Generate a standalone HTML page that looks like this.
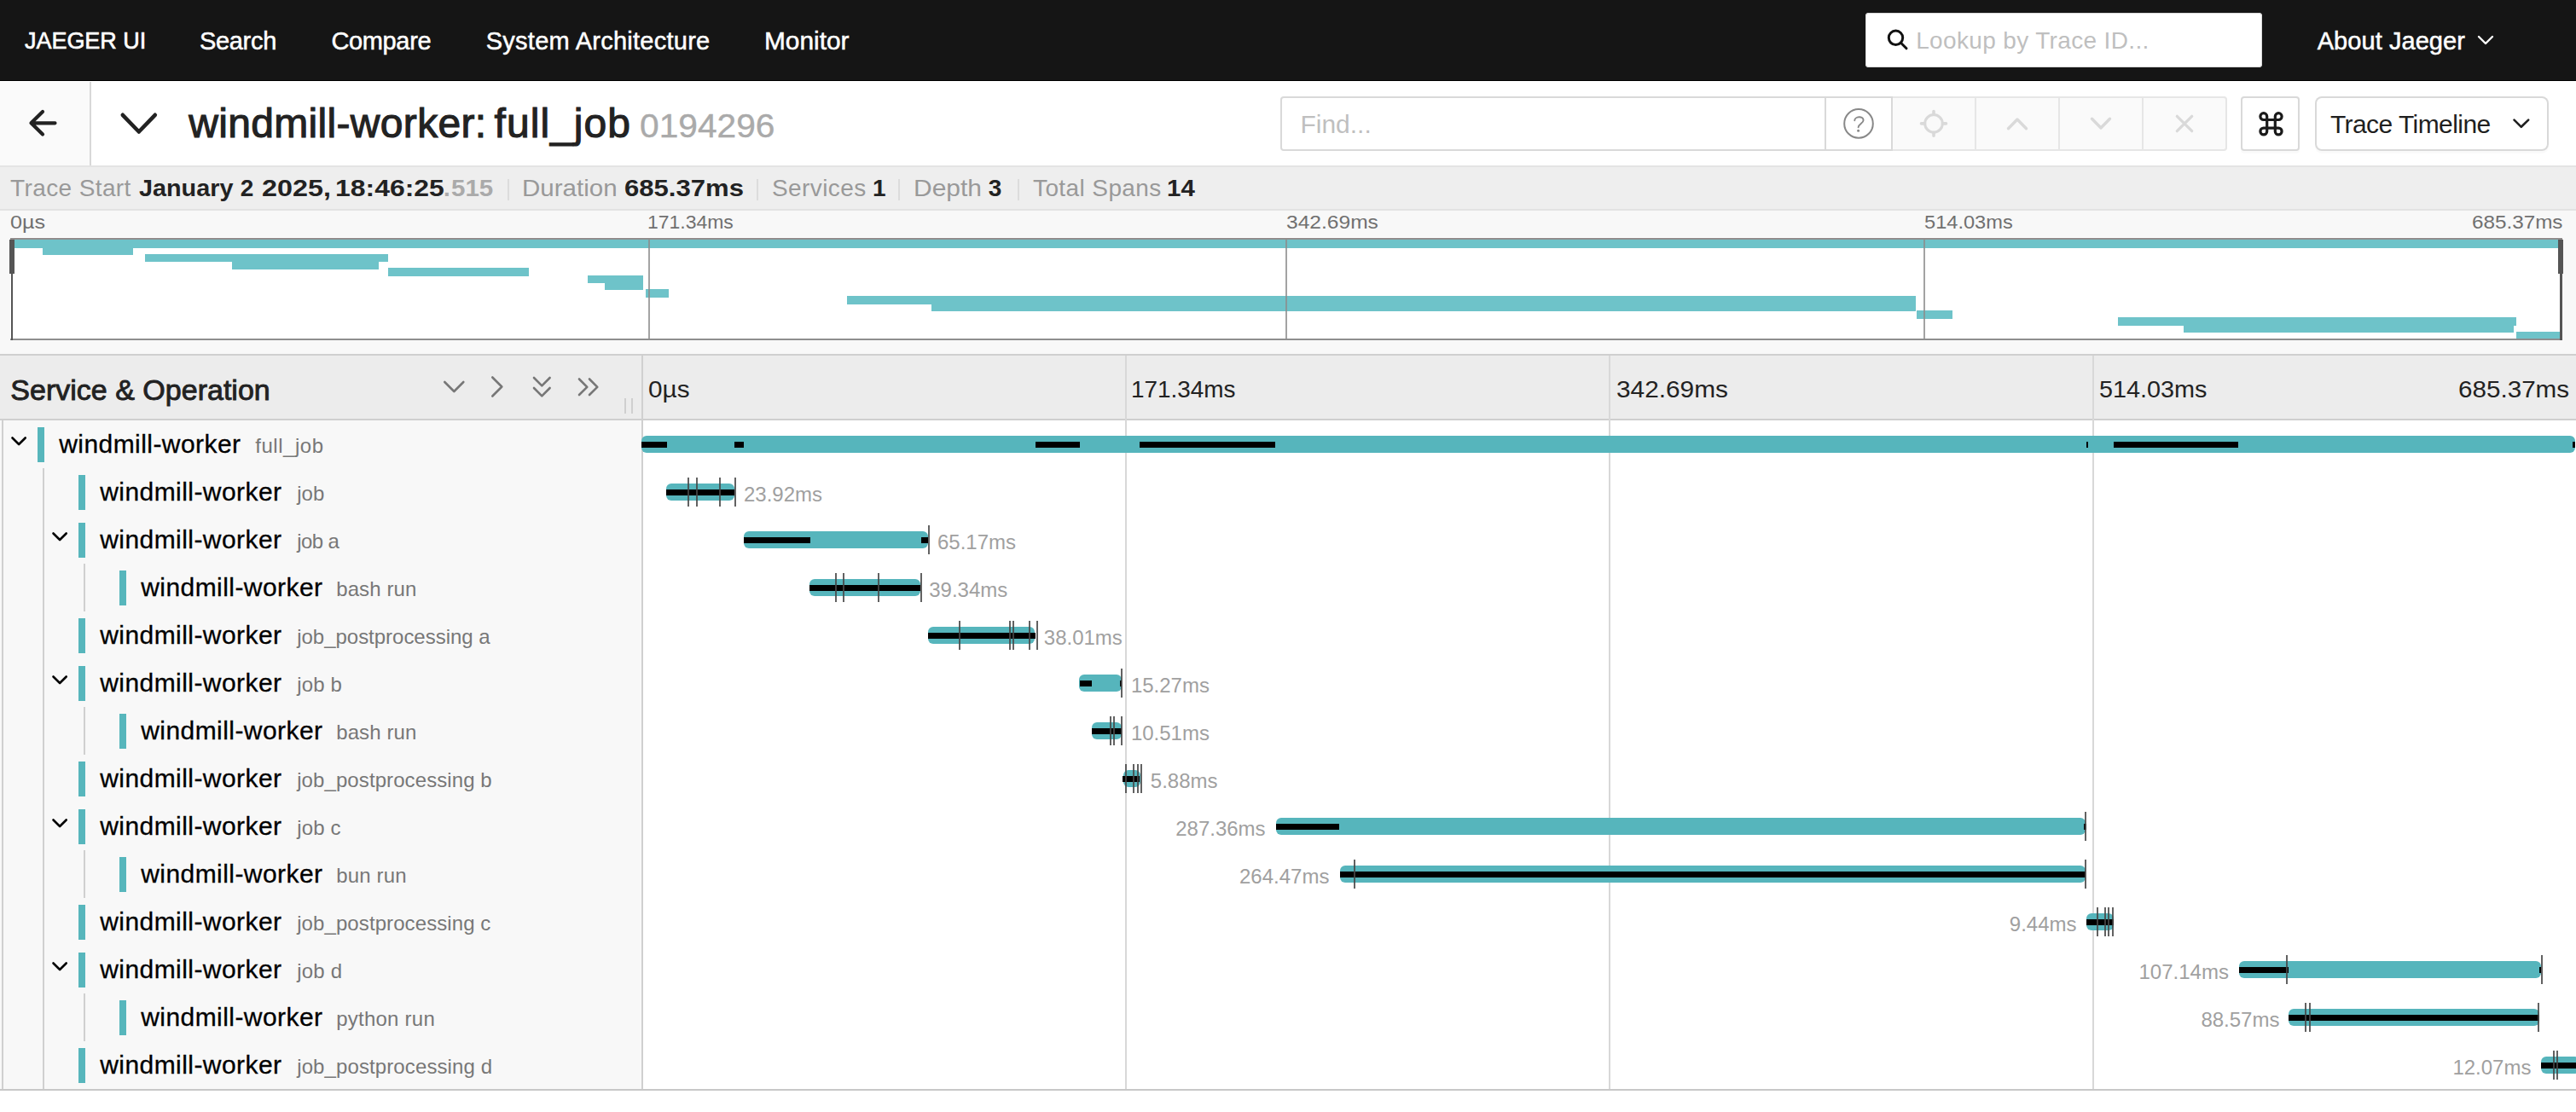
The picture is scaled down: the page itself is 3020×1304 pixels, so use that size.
<!DOCTYPE html>
<html><head><meta charset="utf-8"><title>Jaeger UI</title>
<style>
html,body{margin:0;padding:0;width:3020px;height:1304px;overflow:hidden;background:#fff;}
body{position:relative;font-family:"Liberation Sans", sans-serif;}
.r{position:absolute;}
.t{position:absolute;white-space:nowrap;}
svg{position:absolute;left:0;top:0;}
</style></head><body>
<div class="r" style="left:0.0px;top:0.0px;width:3020.0px;height:95.0px;background:#151515;"></div>
<div class="r" style="left:0.0px;top:94.0px;width:3020.0px;height:1.0px;background:#000;"></div>
<div class="r" style="left:2187.0px;top:15.0px;width:465.0px;height:64.0px;background:#fff;border-radius:4px;box-shadow:inset 0 0 0 1px #d9d9d9;"></div>
<div class="r" style="left:0.0px;top:95.0px;width:3020.0px;height:99.0px;background:#fff;"></div>
<div class="r" style="left:0.0px;top:96.0px;width:105.0px;height:98.0px;background:#fafafa;"></div>
<div class="r" style="left:105.0px;top:96.0px;width:2.0px;height:100.0px;background:#d8d8d8;"></div>
<div class="r" style="left:0.0px;top:194.0px;width:3020.0px;height:2.0px;background:#e4e4e4;"></div>
<div class="r" style="left:1501.0px;top:113.0px;width:718.0px;height:64.0px;background:#fff;border-radius:4px 0 0 4px;box-shadow:inset 0 0 0 2px #d9d9d9;"></div>
<div class="r" style="left:2217.0px;top:113.0px;width:393.5px;height:64.0px;background:#fafafa;border-radius:0 4px 4px 0;box-shadow:inset 0 0 0 2px #e6e6e6;"></div>
<div class="r" style="left:2139.0px;top:113.0px;width:2.0px;height:64.0px;background:#d9d9d9;"></div>
<div class="r" style="left:2217.0px;top:113.0px;width:2.0px;height:64.0px;background:#d9d9d9;"></div>
<div class="r" style="left:2315.0px;top:113.0px;width:2.0px;height:64.0px;background:#e6e6e6;"></div>
<div class="r" style="left:2413.0px;top:113.0px;width:2.0px;height:64.0px;background:#e6e6e6;"></div>
<div class="r" style="left:2511.0px;top:113.0px;width:2.0px;height:64.0px;background:#e6e6e6;"></div>
<div class="r" style="left:2627.4px;top:113.0px;width:69.1px;height:63.5px;background:#fff;border-radius:4px;box-shadow:inset 0 0 0 2px #d9d9d9, 0 3px 0 rgba(0,0,0,0.02);"></div>
<div class="r" style="left:2713.6px;top:113.0px;width:274.0px;height:63.5px;background:#fff;border-radius:8px;box-shadow:inset 0 0 0 2px #d9d9d9, 0 3px 0 rgba(0,0,0,0.02);"></div>
<div class="r" style="left:0.0px;top:196.0px;width:3020.0px;height:49.0px;background:#eeeeee;"></div>
<div class="r" style="left:0.0px;top:245.0px;width:3020.0px;height:2.0px;background:#e2e2e2;"></div>
<div class="r" style="left:594.6px;top:210.0px;width:2.0px;height:25.0px;background:#dcdcdc;"></div>
<div class="r" style="left:886.5px;top:210.0px;width:2.0px;height:25.0px;background:#dcdcdc;"></div>
<div class="r" style="left:1053.4px;top:210.0px;width:2.0px;height:25.0px;background:#dcdcdc;"></div>
<div class="r" style="left:1193.0px;top:210.0px;width:2.0px;height:25.0px;background:#dcdcdc;"></div>
<div class="r" style="left:0.0px;top:247.0px;width:3020.0px;height:168.0px;background:#f8f8f8;"></div>
<div class="r" style="left:0.0px;top:415.0px;width:3020.0px;height:2.0px;background:#cfcfcf;"></div>
<div class="r" style="left:12.0px;top:279.0px;width:2992.0px;height:120.0px;background:#fff;"></div>
<div class="r" style="left:12.0px;top:278.0px;width:2992.0px;height:1.0px;background:#fff;"></div>
<div class="r" style="left:12.0px;top:281.1px;width:2990.7px;height:9.6px;background:#6ec3c9;"></div>
<div class="r" style="left:50.3px;top:289.4px;width:105.5px;height:9.6px;background:#6ec3c9;"></div>
<div class="r" style="left:169.8px;top:297.7px;width:285.5px;height:9.6px;background:#6ec3c9;"></div>
<div class="r" style="left:272.3px;top:306.0px;width:171.8px;height:9.6px;background:#6ec3c9;"></div>
<div class="r" style="left:455.3px;top:314.2px;width:164.9px;height:9.6px;background:#6ec3c9;"></div>
<div class="r" style="left:688.8px;top:322.5px;width:65.3px;height:9.6px;background:#6ec3c9;"></div>
<div class="r" style="left:708.6px;top:330.8px;width:45.5px;height:9.6px;background:#6ec3c9;"></div>
<div class="r" style="left:756.7px;top:339.1px;width:27.0px;height:9.6px;background:#6ec3c9;"></div>
<div class="r" style="left:993.1px;top:347.4px;width:1252.7px;height:9.6px;background:#6ec3c9;"></div>
<div class="r" style="left:1092.2px;top:355.7px;width:1153.7px;height:9.6px;background:#6ec3c9;"></div>
<div class="r" style="left:2246.8px;top:364.0px;width:41.8px;height:9.6px;background:#6ec3c9;"></div>
<div class="r" style="left:2482.5px;top:372.2px;width:467.4px;height:9.6px;background:#6ec3c9;"></div>
<div class="r" style="left:2559.9px;top:380.5px;width:387.3px;height:9.6px;background:#6ec3c9;"></div>
<div class="r" style="left:2949.9px;top:388.8px;width:52.8px;height:9.6px;background:#6ec3c9;"></div>
<div class="r" style="left:760.0px;top:281.0px;width:2.0px;height:116.0px;background:rgba(140,140,140,0.8);"></div>
<div class="r" style="left:1507.3px;top:281.0px;width:2.0px;height:116.0px;background:rgba(140,140,140,0.8);"></div>
<div class="r" style="left:2255.0px;top:281.0px;width:2.0px;height:116.0px;background:rgba(140,140,140,0.8);"></div>
<div class="r" style="left:12.0px;top:279.0px;width:2992.0px;height:2.0px;background:#928e8e;"></div>
<div class="r" style="left:12.0px;top:397.0px;width:2992.0px;height:2.0px;background:#8e8e8e;"></div>
<div class="r" style="left:12.5px;top:281.0px;width:2.5px;height:118.0px;background:#555;"></div>
<div class="r" style="left:11.0px;top:281.0px;width:6.0px;height:40.0px;background:#555;"></div>
<div class="r" style="left:3001.0px;top:281.0px;width:2.5px;height:118.0px;background:#555;"></div>
<div class="r" style="left:2999.0px;top:281.0px;width:6.0px;height:40.0px;background:#555;"></div>
<div class="r" style="left:0.0px;top:417.0px;width:3020.0px;height:74.0px;background:#ececec;"></div>
<div class="r" style="left:0.0px;top:491.0px;width:3020.0px;height:2.0px;background:#cfcfcf;"></div>
<div class="r" style="left:0.0px;top:493.0px;width:752.0px;height:784.0px;background:#f8f8f8;"></div>
<div class="r" style="left:752.0px;top:417.0px;width:2.0px;height:860.0px;background:#d0d0d0;"></div>
<div class="r" style="left:754.0px;top:493.0px;width:2266.0px;height:784.0px;background:#fff;"></div>
<div class="r" style="left:0.0px;top:1277.0px;width:3020.0px;height:2.0px;background:#c8c8c8;"></div>
<div class="r" style="left:1319.3px;top:417.0px;width:2.0px;height:860.0px;background:#d8d8d8;"></div>
<div class="r" style="left:1886.0px;top:417.0px;width:2.0px;height:860.0px;background:#d8d8d8;"></div>
<div class="r" style="left:2452.8px;top:417.0px;width:2.0px;height:860.0px;background:#d8d8d8;"></div>
<div class="r" style="left:732.0px;top:467.0px;width:2.0px;height:18.0px;background:#cfcfcf;"></div>
<div class="r" style="left:740.0px;top:467.0px;width:2.0px;height:18.0px;background:#cfcfcf;"></div>
<div class="r" style="left:2.0px;top:493.0px;width:2.0px;height:784.0px;background:#d0d0d0;"></div>
<div class="r" style="left:50.0px;top:549.0px;width:2.0px;height:728.0px;background:#d0d0d0;"></div>
<div class="r" style="left:44.0px;top:501.0px;width:8.0px;height:40.6px;background:#57b6bc;"></div>
<div class="r" style="left:92.0px;top:557.0px;width:8.0px;height:40.6px;background:#57b6bc;"></div>
<div class="r" style="left:92.0px;top:613.0px;width:8.0px;height:40.6px;background:#57b6bc;"></div>
<div class="r" style="left:98.0px;top:661.0px;width:2.0px;height:56.0px;background:#d0d0d0;"></div>
<div class="r" style="left:140.0px;top:669.0px;width:8.0px;height:40.6px;background:#57b6bc;"></div>
<div class="r" style="left:92.0px;top:725.0px;width:8.0px;height:40.6px;background:#57b6bc;"></div>
<div class="r" style="left:92.0px;top:781.0px;width:8.0px;height:40.6px;background:#57b6bc;"></div>
<div class="r" style="left:98.0px;top:829.0px;width:2.0px;height:56.0px;background:#d0d0d0;"></div>
<div class="r" style="left:140.0px;top:837.0px;width:8.0px;height:40.6px;background:#57b6bc;"></div>
<div class="r" style="left:92.0px;top:893.0px;width:8.0px;height:40.6px;background:#57b6bc;"></div>
<div class="r" style="left:92.0px;top:949.0px;width:8.0px;height:40.6px;background:#57b6bc;"></div>
<div class="r" style="left:98.0px;top:997.0px;width:2.0px;height:56.0px;background:#d0d0d0;"></div>
<div class="r" style="left:140.0px;top:1005.0px;width:8.0px;height:40.6px;background:#57b6bc;"></div>
<div class="r" style="left:92.0px;top:1061.0px;width:8.0px;height:40.6px;background:#57b6bc;"></div>
<div class="r" style="left:92.0px;top:1117.0px;width:8.0px;height:40.6px;background:#57b6bc;"></div>
<div class="r" style="left:98.0px;top:1165.0px;width:2.0px;height:56.0px;background:#d0d0d0;"></div>
<div class="r" style="left:140.0px;top:1173.0px;width:8.0px;height:40.6px;background:#57b6bc;"></div>
<div class="r" style="left:92.0px;top:1229.0px;width:8.0px;height:40.6px;background:#57b6bc;"></div>
<div class="r" style="left:752.0px;top:511.0px;width:2267.0px;height:20.0px;background:#56b5bc;border-radius:6px;"></div>
<div class="r" style="left:752.0px;top:518.0px;width:30.0px;height:7.0px;background:#000;"></div>
<div class="r" style="left:861.0px;top:518.0px;width:11.0px;height:7.0px;background:#000;"></div>
<div class="r" style="left:1214.0px;top:518.0px;width:52.0px;height:7.0px;background:#000;"></div>
<div class="r" style="left:1336.0px;top:518.0px;width:159.0px;height:7.0px;background:#000;"></div>
<div class="r" style="left:2445.5px;top:518.0px;width:2.0px;height:7.0px;background:#000;"></div>
<div class="r" style="left:2478.0px;top:518.0px;width:146.0px;height:7.0px;background:#000;"></div>
<div class="r" style="left:3016.0px;top:518.0px;width:3.0px;height:7.0px;background:#000;"></div>
<div class="r" style="left:781.0px;top:567.0px;width:80.0px;height:20.0px;background:#56b5bc;border-radius:6px;"></div>
<div class="r" style="left:781.0px;top:574.0px;width:80.0px;height:7.0px;background:#000;"></div>
<div class="r" style="left:806.0px;top:560.0px;width:2.0px;height:34.0px;background:rgba(70,70,70,0.85);"></div>
<div class="r" style="left:816.0px;top:560.0px;width:2.0px;height:34.0px;background:rgba(70,70,70,0.85);"></div>
<div class="r" style="left:843.0px;top:560.0px;width:2.0px;height:34.0px;background:rgba(70,70,70,0.85);"></div>
<div class="r" style="left:861.0px;top:560.0px;width:2.0px;height:34.0px;background:rgba(70,70,70,0.85);"></div>
<div class="r" style="left:871.6px;top:623.0px;width:216.4px;height:20.0px;background:#56b5bc;border-radius:6px;"></div>
<div class="r" style="left:871.6px;top:630.0px;width:78.4px;height:7.0px;background:#000;"></div>
<div class="r" style="left:1080.0px;top:630.0px;width:8.0px;height:7.0px;background:#000;"></div>
<div class="r" style="left:1088.3px;top:616.0px;width:2.0px;height:34.0px;background:rgba(70,70,70,0.85);"></div>
<div class="r" style="left:949.3px;top:679.0px;width:130.2px;height:20.0px;background:#56b5bc;border-radius:6px;"></div>
<div class="r" style="left:949.3px;top:686.0px;width:130.2px;height:7.0px;background:#000;"></div>
<div class="r" style="left:979.0px;top:672.0px;width:2.0px;height:34.0px;background:rgba(70,70,70,0.85);"></div>
<div class="r" style="left:988.0px;top:672.0px;width:2.0px;height:34.0px;background:rgba(70,70,70,0.85);"></div>
<div class="r" style="left:1029.0px;top:672.0px;width:2.0px;height:34.0px;background:rgba(70,70,70,0.85);"></div>
<div class="r" style="left:1079.0px;top:672.0px;width:2.0px;height:34.0px;background:rgba(70,70,70,0.85);"></div>
<div class="r" style="left:1088.0px;top:735.0px;width:125.0px;height:20.0px;background:#56b5bc;border-radius:6px;"></div>
<div class="r" style="left:1088.0px;top:742.0px;width:126.0px;height:7.0px;background:#000;"></div>
<div class="r" style="left:1124.0px;top:728.0px;width:2.0px;height:34.0px;background:rgba(70,70,70,0.85);"></div>
<div class="r" style="left:1183.0px;top:728.0px;width:2.0px;height:34.0px;background:rgba(70,70,70,0.85);"></div>
<div class="r" style="left:1187.0px;top:728.0px;width:2.0px;height:34.0px;background:rgba(70,70,70,0.85);"></div>
<div class="r" style="left:1206.0px;top:728.0px;width:2.0px;height:34.0px;background:rgba(70,70,70,0.85);"></div>
<div class="r" style="left:1215.0px;top:728.0px;width:2.0px;height:34.0px;background:rgba(70,70,70,0.85);"></div>
<div class="r" style="left:1265.0px;top:791.0px;width:49.5px;height:20.0px;background:#56b5bc;border-radius:6px;"></div>
<div class="r" style="left:1266.0px;top:798.0px;width:14.0px;height:7.0px;background:#000;"></div>
<div class="r" style="left:1313.0px;top:798.0px;width:2.0px;height:7.0px;background:#000;"></div>
<div class="r" style="left:1314.0px;top:784.0px;width:2.0px;height:34.0px;background:rgba(70,70,70,0.85);"></div>
<div class="r" style="left:1280.0px;top:847.0px;width:34.5px;height:20.0px;background:#56b5bc;border-radius:6px;"></div>
<div class="r" style="left:1280.0px;top:854.0px;width:34.5px;height:7.0px;background:#000;"></div>
<div class="r" style="left:1301.0px;top:840.0px;width:2.0px;height:34.0px;background:rgba(70,70,70,0.85);"></div>
<div class="r" style="left:1305.0px;top:840.0px;width:2.0px;height:34.0px;background:rgba(70,70,70,0.85);"></div>
<div class="r" style="left:1314.0px;top:840.0px;width:2.0px;height:34.0px;background:rgba(70,70,70,0.85);"></div>
<div class="r" style="left:1316.5px;top:903.0px;width:20.5px;height:20.0px;background:#56b5bc;border-radius:6px;"></div>
<div class="r" style="left:1316.0px;top:910.0px;width:20.0px;height:7.0px;background:#000;"></div>
<div class="r" style="left:1319.0px;top:896.0px;width:2.0px;height:34.0px;background:rgba(70,70,70,0.85);"></div>
<div class="r" style="left:1328.0px;top:896.0px;width:2.0px;height:34.0px;background:rgba(70,70,70,0.85);"></div>
<div class="r" style="left:1333.0px;top:896.0px;width:2.0px;height:34.0px;background:rgba(70,70,70,0.85);"></div>
<div class="r" style="left:1337.0px;top:896.0px;width:2.0px;height:34.0px;background:rgba(70,70,70,0.85);"></div>
<div class="r" style="left:1495.7px;top:959.0px;width:949.6px;height:20.0px;background:#56b5bc;border-radius:6px;"></div>
<div class="r" style="left:1495.5px;top:966.0px;width:74.5px;height:7.0px;background:#000;"></div>
<div class="r" style="left:2443.0px;top:966.0px;width:3.0px;height:7.0px;background:#000;"></div>
<div class="r" style="left:2444.0px;top:952.0px;width:2.0px;height:34.0px;background:rgba(70,70,70,0.85);"></div>
<div class="r" style="left:1570.8px;top:1015.0px;width:874.5px;height:20.0px;background:#56b5bc;border-radius:6px;"></div>
<div class="r" style="left:1570.8px;top:1022.0px;width:874.5px;height:7.0px;background:#000;"></div>
<div class="r" style="left:1587.0px;top:1008.0px;width:2.0px;height:34.0px;background:rgba(70,70,70,0.85);"></div>
<div class="r" style="left:2444.0px;top:1008.0px;width:2.0px;height:34.0px;background:rgba(70,70,70,0.85);"></div>
<div class="r" style="left:2446.0px;top:1071.0px;width:31.7px;height:20.0px;background:#56b5bc;border-radius:6px;"></div>
<div class="r" style="left:2446.0px;top:1078.0px;width:31.7px;height:7.0px;background:#000;"></div>
<div class="r" style="left:2458.0px;top:1064.0px;width:2.0px;height:34.0px;background:rgba(70,70,70,0.85);"></div>
<div class="r" style="left:2467.0px;top:1064.0px;width:2.0px;height:34.0px;background:rgba(70,70,70,0.85);"></div>
<div class="r" style="left:2471.0px;top:1064.0px;width:2.0px;height:34.0px;background:rgba(70,70,70,0.85);"></div>
<div class="r" style="left:2476.0px;top:1064.0px;width:2.0px;height:34.0px;background:rgba(70,70,70,0.85);"></div>
<div class="r" style="left:2624.7px;top:1127.0px;width:354.3px;height:20.0px;background:#56b5bc;border-radius:6px;"></div>
<div class="r" style="left:2624.5px;top:1134.0px;width:58.5px;height:7.0px;background:#000;"></div>
<div class="r" style="left:2977.0px;top:1134.0px;width:2.0px;height:7.0px;background:#000;"></div>
<div class="r" style="left:2680.0px;top:1120.0px;width:2.0px;height:34.0px;background:rgba(70,70,70,0.85);"></div>
<div class="r" style="left:2979.0px;top:1120.0px;width:2.0px;height:34.0px;background:rgba(70,70,70,0.85);"></div>
<div class="r" style="left:2683.4px;top:1183.0px;width:293.6px;height:20.0px;background:#56b5bc;border-radius:6px;"></div>
<div class="r" style="left:2683.4px;top:1190.0px;width:293.6px;height:7.0px;background:#000;"></div>
<div class="r" style="left:2702.0px;top:1176.0px;width:2.0px;height:34.0px;background:rgba(70,70,70,0.85);"></div>
<div class="r" style="left:2707.0px;top:1176.0px;width:2.0px;height:34.0px;background:rgba(70,70,70,0.85);"></div>
<div class="r" style="left:2975.0px;top:1176.0px;width:2.0px;height:34.0px;background:rgba(70,70,70,0.85);"></div>
<div class="r" style="left:2979.0px;top:1239.0px;width:45.0px;height:20.0px;background:#56b5bc;border-radius:6px;"></div>
<div class="r" style="left:2979.0px;top:1246.0px;width:45.0px;height:7.0px;background:#000;"></div>
<div class="r" style="left:2993.0px;top:1232.0px;width:2.0px;height:34.0px;background:rgba(70,70,70,0.85);"></div>
<div class="r" style="left:2997.0px;top:1232.0px;width:2.0px;height:34.0px;background:rgba(70,70,70,0.85);"></div>
<svg width="3020" height="1304" viewBox="0 0 3020 1304">
<path d="M36.5 144.3 H64.5 M50 131 L36.5 144.3 L50 157.6" fill="none" stroke="#222" stroke-width="4.2" stroke-linecap="round" stroke-linejoin="round"/>
<path d="M143.8 134.8 L162.8 154.5 L181.8 134.8" fill="none" stroke="#222" stroke-width="4.6" stroke-linecap="round" stroke-linejoin="round"/>
<circle cx="2222.5" cy="44.3" r="8.2" fill="none" stroke="#111" stroke-width="3"/><path d="M2228.5 50.3 L2235 56.8" stroke="#111" stroke-width="3" stroke-linecap="round"/>
<path d="M2906 43 L2914 51 L2922 43" fill="none" stroke="#fff" stroke-width="2.4" stroke-linecap="round" stroke-linejoin="round"/>
<circle cx="2179" cy="144.9" r="16.8" fill="none" stroke="#888" stroke-width="2"/>
<path d="M2174.3 141.2 C2174.3 136.5 2184.6 135.5 2184.6 141 C2184.6 144.5 2178.6 145.5 2178.6 149.3" fill="none" stroke="#888" stroke-width="1.9" stroke-linecap="round"/><circle cx="2178.6" cy="153.2" r="1.5" fill="#888"/>
<circle cx="2267" cy="144.9" r="10.3" fill="none" stroke="#d9d9d9" stroke-width="3"/><path d="M2267 130.5 V134.5 M2267 155.3 V159.3 M2252.5 144.9 H2256.5 M2277.5 144.9 H2281.5" stroke="#d9d9d9" stroke-width="3.6" stroke-linecap="round"/>
<path d="M2354.5 150.8 L2365 140 L2375.5 150.8" fill="none" stroke="#d9d9d9" stroke-width="3.4" stroke-linecap="round" stroke-linejoin="round"/>
<path d="M2452.5 139.2 L2463 150 L2473.5 139.2" fill="none" stroke="#d9d9d9" stroke-width="3.4" stroke-linecap="round" stroke-linejoin="round"/>
<path d="M2552.3 136.3 L2569.7 153.7 M2569.7 136.3 L2552.3 153.7" fill="none" stroke="#d9d9d9" stroke-width="3.2" stroke-linecap="round"/>
<g fill="none" stroke="#1a1a1a" stroke-width="3.2"><path d="M2657.7 140.5 V150.10000000000002 M2667.3 140.5 V150.10000000000002 M2657.7 140.5 H2667.3 M2657.7 150.10000000000002 H2667.3"/><path d="M2657.7 140.5 V136.6 A3.9 3.9 0 1 0 2653.7999999999997 140.5 H2657.7"/><path d="M2667.3 140.5 V136.6 A3.9 3.9 0 1 1 2671.2000000000003 140.5 H2667.3"/><path d="M2657.7 150.10000000000002 V154.00000000000003 A3.9 3.9 0 1 1 2653.7999999999997 150.10000000000002 H2657.7"/><path d="M2667.3 150.10000000000002 V154.00000000000003 A3.9 3.9 0 1 0 2671.2000000000003 150.10000000000002 H2667.3"/></g>
<path d="M2947.5 140.6 L2955.8 148.8 L2964.2 140.6" fill="none" stroke="#1f1f1f" stroke-width="2.6" stroke-linecap="round" stroke-linejoin="round"/>
<path d="M521.3 448 L532.3 459 L543.3 448" fill="none" stroke="#777" stroke-width="2.6" stroke-linecap="round" stroke-linejoin="round"/>
<path d="M577.3 442.5 L588.3 453.5 L577.3 464.5" fill="none" stroke="#777" stroke-width="2.6" stroke-linecap="round" stroke-linejoin="round"/>
<path d="M626 443 L635.3 452.3 L644.6 443 M626 455 L635.3 464.3 L644.6 455" fill="none" stroke="#777" stroke-width="2.6" stroke-linecap="round" stroke-linejoin="round"/>
<path d="M679 444.5 L688.3 453.8 L679 463 M691 444.5 L700.3 453.8 L691 463" fill="none" stroke="#777" stroke-width="2.6" stroke-linecap="round" stroke-linejoin="round"/>
<path d="M14.5 513.5 L22.1 521 L29.7 513.5" fill="none" stroke="#000" stroke-width="2.6" stroke-linecap="round" stroke-linejoin="round"/>
<path d="M62.5 625.5 L70.1 633 L77.7 625.5" fill="none" stroke="#000" stroke-width="2.6" stroke-linecap="round" stroke-linejoin="round"/>
<path d="M62.5 793.5 L70.1 801 L77.7 793.5" fill="none" stroke="#000" stroke-width="2.6" stroke-linecap="round" stroke-linejoin="round"/>
<path d="M62.5 961.5 L70.1 969 L77.7 961.5" fill="none" stroke="#000" stroke-width="2.6" stroke-linecap="round" stroke-linejoin="round"/>
<path d="M62.5 1129.5 L70.1 1137 L77.7 1129.5" fill="none" stroke="#000" stroke-width="2.6" stroke-linecap="round" stroke-linejoin="round"/>
</svg>
<div class="t" style="left:29.1px;top:35.3px;font-size:27px;line-height:27px;color:#fff;letter-spacing:-0.06px;-webkit-text-stroke:0.6px #fff;">JAEGER UI</div>
<div class="t" style="left:233.9px;top:33.7px;font-size:29px;line-height:29px;color:#fff;letter-spacing:-0.30px;-webkit-text-stroke:0.5px #fff;">Search</div>
<div class="t" style="left:388.4px;top:33.7px;font-size:29px;line-height:29px;color:#fff;letter-spacing:-0.35px;-webkit-text-stroke:0.5px #fff;">Compare</div>
<div class="t" style="left:569.7px;top:33.7px;font-size:29px;line-height:29px;color:#fff;letter-spacing:0.26px;-webkit-text-stroke:0.5px #fff;">System Architecture</div>
<div class="t" style="left:895.8px;top:33.7px;font-size:29px;line-height:29px;color:#fff;-webkit-text-stroke:0.5px #fff;transform:scaleX(1.0295);transform-origin:0 0;">Monitor</div>
<div class="t" style="left:2716.7px;top:33.9px;font-size:29px;line-height:29px;color:#fff;letter-spacing:0.06px;-webkit-text-stroke:0.5px #fff;">About Jaeger</div>
<div class="t" style="left:2246.2px;top:34.1px;font-size:28px;line-height:28px;color:#bfbfbf;letter-spacing:0.35px;">Lookup by Trace ID...</div>
<div class="t" style="left:221.2px;top:120.6px;font-size:48px;line-height:48px;color:#222;letter-spacing:0.33px;-webkit-text-stroke:1.1px #222;">windmill-worker:</div>
<div class="t" style="left:579.5px;top:120.6px;font-size:48px;line-height:48px;color:#222;letter-spacing:1.06px;-webkit-text-stroke:1.1px #222;">full_job</div>
<div class="t" style="left:750.0px;top:128.2px;font-size:39px;line-height:39px;color:#aaa;-webkit-text-stroke:0.4px #aaa;transform:scaleX(1.0433);transform-origin:0 0;">0194296</div>
<div class="t" style="left:1524.4px;top:131.1px;font-size:30px;line-height:30px;color:#bfbfbf;">Find...</div>
<div class="t" style="left:2731.9px;top:130.9px;font-size:30px;line-height:30px;color:#1f1f1f;letter-spacing:-0.56px;">Trace Timeline</div>
<div class="t" style="left:12.1px;top:207.1px;font-size:28px;line-height:28px;color:#999;letter-spacing:0.38px;">Trace Start</div>
<div class="t" style="left:162.5px;top:207.1px;font-size:28px;line-height:28px;color:#222;font-weight:700;transform:scaleX(1.0283);transform-origin:0 0;">January</div>
<div class="t" style="left:281.8px;top:207.1px;font-size:28px;line-height:28px;color:#222;font-weight:700;">2</div>
<div class="t" style="left:307.1px;top:207.1px;font-size:28px;line-height:28px;color:#222;font-weight:700;transform:scaleX(1.1552);transform-origin:0 0;">2025,</div>
<div class="t" style="left:393.2px;top:207.1px;font-size:28px;line-height:28px;color:#222;font-weight:700;transform:scaleX(1.1404);transform-origin:0 0;">18:46:25</div>
<div class="t" style="left:520.0px;top:207.1px;font-size:28px;line-height:28px;color:#aaa;font-weight:700;">.</div>
<div class="t" style="left:529.1px;top:207.1px;font-size:28px;line-height:28px;color:#aaa;font-weight:700;transform:scaleX(1.0533);transform-origin:0 0;">515</div>
<div class="t" style="left:612.1px;top:207.1px;font-size:28px;line-height:28px;color:#999;transform:scaleX(1.0549);transform-origin:0 0;">Duration</div>
<div class="t" style="left:731.5px;top:207.1px;font-size:28px;line-height:28px;color:#222;font-weight:700;transform:scaleX(1.1097);transform-origin:0 0;">685.37ms</div>
<div class="t" style="left:905.0px;top:207.1px;font-size:28px;line-height:28px;color:#999;letter-spacing:0.40px;">Services</div>
<div class="t" style="left:1023.0px;top:207.1px;font-size:28px;line-height:28px;color:#222;font-weight:700;">1</div>
<div class="t" style="left:1070.9px;top:207.1px;font-size:28px;line-height:28px;color:#999;transform:scaleX(1.0704);transform-origin:0 0;">Depth</div>
<div class="t" style="left:1158.7px;top:207.1px;font-size:28px;line-height:28px;color:#222;font-weight:700;">3</div>
<div class="t" style="left:1211.0px;top:207.1px;font-size:28px;line-height:28px;color:#999;letter-spacing:0.40px;">Total Spans</div>
<div class="t" style="left:1367.9px;top:207.1px;font-size:28px;line-height:28px;color:#222;font-weight:700;transform:scaleX(1.0517);transform-origin:0 0;">14</div>
<div class="t" style="left:11.5px;top:249.7px;font-size:22px;line-height:22px;color:#707070;transform:scaleX(1.1441);transform-origin:0 0;">0µs</div>
<div class="t" style="left:758.5px;top:249.7px;font-size:22px;line-height:22px;color:#707070;transform:scaleX(1.0426);transform-origin:0 0;">171.34ms</div>
<div class="t" style="left:1508.1px;top:249.7px;font-size:22px;line-height:22px;color:#707070;transform:scaleX(1.1168);transform-origin:0 0;">342.69ms</div>
<div class="t" style="left:2256.0px;top:249.7px;font-size:22px;line-height:22px;color:#707070;transform:scaleX(1.0737);transform-origin:0 0;">514.03ms</div>
<div class="t" style="left:2897.5px;top:249.7px;font-size:22px;line-height:22px;color:#707070;transform:scaleX(1.1021);transform-origin:0 0;">685.37ms</div>
<div class="t" style="left:12.3px;top:439.8px;font-size:34px;line-height:34px;color:#222;letter-spacing:0.01px;-webkit-text-stroke:0.9px #222;">Service &amp; Operation</div>
<div class="t" style="left:760.1px;top:442.8px;font-size:28px;line-height:28px;color:#222;transform:scaleX(1.0614);transform-origin:0 0;">0µs</div>
<div class="t" style="left:1325.8px;top:442.8px;font-size:28px;line-height:28px;color:#222;transform:scaleX(0.9958);transform-origin:0 0;">171.34ms</div>
<div class="t" style="left:1894.7px;top:442.8px;font-size:28px;line-height:28px;color:#222;transform:scaleX(1.0645);transform-origin:0 0;">342.69ms</div>
<div class="t" style="left:2461.1px;top:442.8px;font-size:28px;line-height:28px;color:#222;transform:scaleX(1.0281);transform-origin:0 0;">514.03ms</div>
<div class="t" style="left:2882.2px;top:442.8px;font-size:28px;line-height:28px;color:#222;transform:scaleX(1.0579);transform-origin:0 0;">685.37ms</div>
<div class="t" style="left:69.2px;top:505.8px;font-size:30px;line-height:30px;color:#000;letter-spacing:0.44px;-webkit-text-stroke:0.3px #000;">windmill-worker</div>
<div class="t" style="left:299.2px;top:510.9px;font-size:24px;line-height:24px;color:#777;letter-spacing:0.54px;">full_job</div>
<div class="t" style="left:117.2px;top:561.8px;font-size:30px;line-height:30px;color:#000;letter-spacing:0.44px;-webkit-text-stroke:0.3px #000;">windmill-worker</div>
<div class="t" style="left:348.2px;top:566.9px;font-size:24px;line-height:24px;color:#777;letter-spacing:0.10px;">job</div>
<div class="t" style="left:872.0px;top:567.5px;font-size:24px;line-height:24px;color:#a0a0a0;">23.92ms</div>
<div class="t" style="left:117.2px;top:617.8px;font-size:30px;line-height:30px;color:#000;letter-spacing:0.44px;-webkit-text-stroke:0.3px #000;">windmill-worker</div>
<div class="t" style="left:348.2px;top:622.9px;font-size:24px;line-height:24px;color:#777;letter-spacing:-0.60px;">job a</div>
<div class="t" style="left:1099.0px;top:623.5px;font-size:24px;line-height:24px;color:#a0a0a0;">65.17ms</div>
<div class="t" style="left:165.2px;top:673.8px;font-size:30px;line-height:30px;color:#000;letter-spacing:0.44px;-webkit-text-stroke:0.3px #000;">windmill-worker</div>
<div class="t" style="left:394.2px;top:678.9px;font-size:24px;line-height:24px;color:#777;letter-spacing:0.10px;">bash run</div>
<div class="t" style="left:1089.2px;top:679.5px;font-size:24px;line-height:24px;color:#a0a0a0;">39.34ms</div>
<div class="t" style="left:117.2px;top:729.8px;font-size:30px;line-height:30px;color:#000;letter-spacing:0.44px;-webkit-text-stroke:0.3px #000;">windmill-worker</div>
<div class="t" style="left:348.2px;top:734.9px;font-size:24px;line-height:24px;color:#777;letter-spacing:-0.02px;">job_postprocessing a</div>
<div class="t" style="left:1223.8px;top:735.5px;font-size:24px;line-height:24px;color:#a0a0a0;">38.01ms</div>
<div class="t" style="left:117.2px;top:785.8px;font-size:30px;line-height:30px;color:#000;letter-spacing:0.44px;-webkit-text-stroke:0.3px #000;">windmill-worker</div>
<div class="t" style="left:348.2px;top:790.9px;font-size:24px;line-height:24px;color:#777;letter-spacing:0.17px;">job b</div>
<div class="t" style="left:1325.9px;top:791.5px;font-size:24px;line-height:24px;color:#a0a0a0;">15.27ms</div>
<div class="t" style="left:165.2px;top:841.8px;font-size:30px;line-height:30px;color:#000;letter-spacing:0.44px;-webkit-text-stroke:0.3px #000;">windmill-worker</div>
<div class="t" style="left:394.2px;top:846.9px;font-size:24px;line-height:24px;color:#777;letter-spacing:0.10px;">bash run</div>
<div class="t" style="left:1325.9px;top:847.5px;font-size:24px;line-height:24px;color:#a0a0a0;">10.51ms</div>
<div class="t" style="left:117.2px;top:897.8px;font-size:30px;line-height:30px;color:#000;letter-spacing:0.44px;-webkit-text-stroke:0.3px #000;">windmill-worker</div>
<div class="t" style="left:348.2px;top:902.9px;font-size:24px;line-height:24px;color:#777;letter-spacing:0.09px;">job_postprocessing b</div>
<div class="t" style="left:1348.8px;top:903.5px;font-size:24px;line-height:24px;color:#a0a0a0;">5.88ms</div>
<div class="t" style="left:117.2px;top:953.8px;font-size:30px;line-height:30px;color:#000;letter-spacing:0.44px;-webkit-text-stroke:0.3px #000;">windmill-worker</div>
<div class="t" style="left:348.2px;top:958.9px;font-size:24px;line-height:24px;color:#777;letter-spacing:0.17px;">job c</div>
<div class="t" style="left:1378.2px;top:959.5px;font-size:24px;line-height:24px;color:#a0a0a0;">287.36ms</div>
<div class="t" style="left:165.2px;top:1009.8px;font-size:30px;line-height:30px;color:#000;letter-spacing:0.44px;-webkit-text-stroke:0.3px #000;">windmill-worker</div>
<div class="t" style="left:394.2px;top:1014.9px;font-size:24px;line-height:24px;color:#777;letter-spacing:0.15px;">bun run</div>
<div class="t" style="left:1453.0px;top:1015.5px;font-size:24px;line-height:24px;color:#a0a0a0;">264.47ms</div>
<div class="t" style="left:117.2px;top:1065.8px;font-size:30px;line-height:30px;color:#000;letter-spacing:0.44px;-webkit-text-stroke:0.3px #000;">windmill-worker</div>
<div class="t" style="left:348.2px;top:1070.9px;font-size:24px;line-height:24px;color:#777;letter-spacing:0.09px;">job_postprocessing c</div>
<div class="t" style="left:2355.8px;top:1071.5px;font-size:24px;line-height:24px;color:#a0a0a0;">9.44ms</div>
<div class="t" style="left:117.2px;top:1121.8px;font-size:30px;line-height:30px;color:#000;letter-spacing:0.44px;-webkit-text-stroke:0.3px #000;">windmill-worker</div>
<div class="t" style="left:348.2px;top:1126.9px;font-size:24px;line-height:24px;color:#777;letter-spacing:0.22px;">job d</div>
<div class="t" style="left:2507.5px;top:1127.5px;font-size:24px;line-height:24px;color:#a0a0a0;">107.14ms</div>
<div class="t" style="left:165.2px;top:1177.8px;font-size:30px;line-height:30px;color:#000;letter-spacing:0.44px;-webkit-text-stroke:0.3px #000;">windmill-worker</div>
<div class="t" style="left:394.2px;top:1182.9px;font-size:24px;line-height:24px;color:#777;letter-spacing:0.24px;">python run</div>
<div class="t" style="left:2580.4px;top:1183.5px;font-size:24px;line-height:24px;color:#a0a0a0;">88.57ms</div>
<div class="t" style="left:117.2px;top:1233.8px;font-size:30px;line-height:30px;color:#000;letter-spacing:0.44px;-webkit-text-stroke:0.3px #000;">windmill-worker</div>
<div class="t" style="left:348.2px;top:1238.9px;font-size:24px;line-height:24px;color:#777;letter-spacing:0.11px;">job_postprocessing d</div>
<div class="t" style="left:2875.4px;top:1239.5px;font-size:24px;line-height:24px;color:#a0a0a0;">12.07ms</div>
</body></html>
